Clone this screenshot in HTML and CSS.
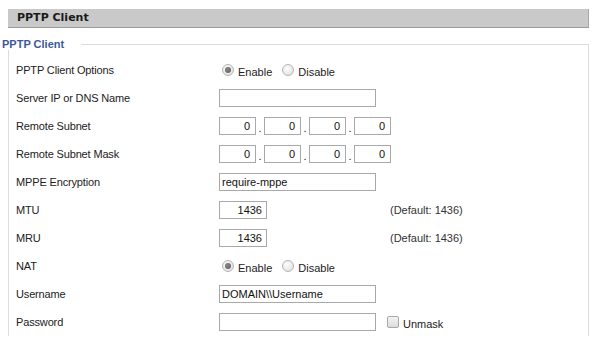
FILE: index.html
```html
<!DOCTYPE html>
<html>
<head>
<meta charset="utf-8">
<link rel="stylesheet" href="styles.css">
</head>
<body>
<div class="page">
  <div class="hdr">PPTP Client</div>
  <fieldset class="fs">
    <legend class="lg">PPTP Client</legend>
    <div class="row">
      <div class="lbl">PPTP Client Options</div>
      <div class="val">
        <span class="radio on"></span><span class="rtxt">Enable</span>
        <span class="radio"></span><span class="rtxt">Disable</span>
      </div>
    </div>
    <div class="row">
      <div class="lbl">Server IP or DNS Name</div>
      <div class="val"><span class="inp wide"></span></div>
    </div>
    <div class="row">
      <div class="lbl">Remote Subnet</div>
      <div class="val ip">
        <span class="inp oct">0</span><span class="dot">.</span>
        <span class="inp oct">0</span><span class="dot">.</span>
        <span class="inp oct">0</span><span class="dot">.</span>
        <span class="inp oct">0</span>
      </div>
    </div>
    <div class="row">
      <div class="lbl">Remote Subnet Mask</div>
      <div class="val ip">
        <span class="inp oct">0</span><span class="dot">.</span>
        <span class="inp oct">0</span><span class="dot">.</span>
        <span class="inp oct">0</span><span class="dot">.</span>
        <span class="inp oct">0</span>
      </div>
    </div>
    <div class="row">
      <div class="lbl">MPPE Encryption</div>
      <div class="val"><span class="inp wide">require-mppe</span></div>
    </div>
    <div class="row">
      <div class="lbl">MTU</div>
      <div class="val"><span class="inp num">1436</span><span class="def">(Default: 1436)</span></div>
    </div>
    <div class="row">
      <div class="lbl">MRU</div>
      <div class="val"><span class="inp num">1436</span><span class="def">(Default: 1436)</span></div>
    </div>
    <div class="row">
      <div class="lbl">NAT</div>
      <div class="val">
        <span class="radio on"></span><span class="rtxt">Enable</span>
        <span class="radio"></span><span class="rtxt">Disable</span>
      </div>
    </div>
    <div class="row">
      <div class="lbl">Username</div>
      <div class="val"><span class="inp wide">DOMAIN\\Username</span></div>
    </div>
    <div class="row">
      <div class="lbl">Password</div>
      <div class="val"><span class="inp wide"></span><span class="chk"></span><span class="rtxt">Unmask</span></div>
    </div>
  </fieldset>
</div>
</body>
</html>
```
FILE: styles.css
```css
html, body {
  margin: 0;
  padding: 0;
  background: #fff;
}
body {
  font-family: "Liberation Sans", Arial, sans-serif;
  font-size: 11px;
  color: #222;
}
.page {
  padding: 9px 9px 0 8px;
  width: 581px;
}
.hdr {
  height: 18px;
  line-height: 18px;
  background: #c9c9c9;
  border-bottom: 1px solid #9a9a9a;
  border-right: 1px solid #a8a8a8;
  padding-left: 9px;
  font-family: "DejaVu Sans", sans-serif;
  font-weight: bold;
  font-size: 11px;
  color: #1a1a1a;
}
.fs {
  margin: 10px 0 0 0;
  padding: 6px 0 0 7px;
  border: 1px solid #dcdcdc;
  border-bottom: none;
  min-width: 0;
}
.lg {
  margin-left: -15px;
  padding: 0 17px 0 1px;
  font-family: "Liberation Sans", Arial, sans-serif;
  font-weight: bold;
  font-size: 11px;
  color: #3a5a9c;
}
.row {
  display: flex;
  align-items: center;
  height: 28px;
}
.lbl {
  width: 203px;
  flex: none;
  letter-spacing: -0.15px;
}
.val {
  display: flex;
  align-items: center;
}
.inp {
  box-sizing: border-box;
  height: 18px;
  line-height: 16px;
  border: 1px solid #a9a9a9;
  padding: 0 2px;
  background: #fff;
  color: #111;
  font-size: 11px;
}
.wide { width: 157px; }
.oct {
  width: 37px;
  text-align: right;
  padding-right: 5px;
}
.dot {
  width: 8px;
  text-align: center;
  padding-top: 4px;
}
.num {
  width: 48px;
  text-align: right;
  padding-right: 4px;
}
.def {
  margin-left: 123px;
  color: #333;
}
.radio {
  box-sizing: border-box;
  width: 12px;
  height: 12px;
  border-radius: 50%;
  border: 1px solid #b5b5b5;
  background: radial-gradient(circle at 40% 35%, #fdfdfd 0, #e6e6e6 70%, #d4d4d4 100%);
  margin-left: 3px;
  position: relative;
}
.radio.on::after {
  content: "";
  position: absolute;
  left: 2px;
  top: 2px;
  width: 6px;
  height: 6px;
  border-radius: 50%;
  background: radial-gradient(circle at 40% 40%, #8a8a8a 0, #555 100%);
}
.rtxt {
  margin-left: 4px;
  margin-right: 7px;
  padding-top: 3px;
}
.chk {
  box-sizing: border-box;
  width: 12px;
  height: 12px;
  border: 1px solid #a8a8a8;
  border-radius: 2px;
  background: linear-gradient(#f4f4f4, #dcdcdc);
  margin-left: 11px;
}
```
